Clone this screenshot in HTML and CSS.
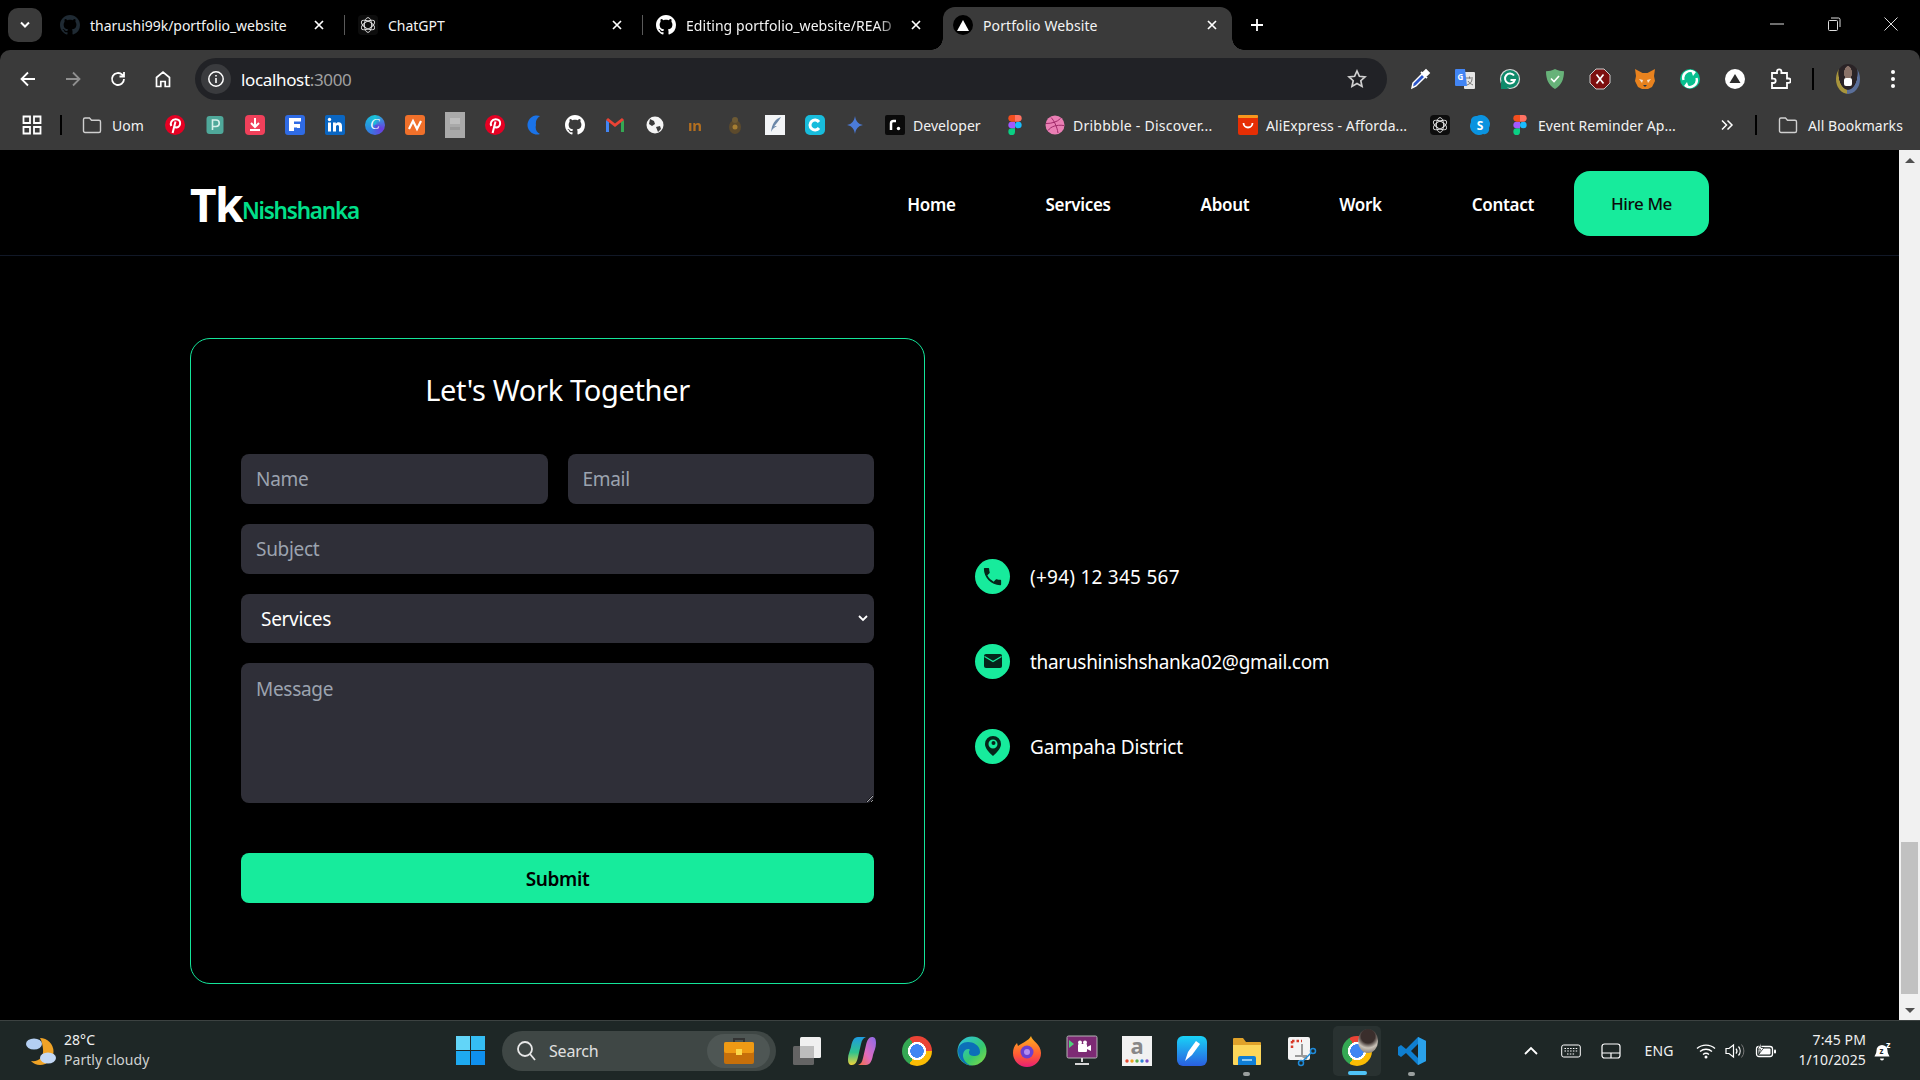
FILE: index.html
```html
<!DOCTYPE html>
<html lang="en">
<head>
<meta charset="utf-8">
<title>Portfolio Website</title>
<link rel="stylesheet" href="styles.css">
</head>
<body>
<svg class="sprite" aria-hidden="true">
  <symbol id="gh" viewBox="0 0 16 16"><path fill="currentColor" d="M8 0C3.58 0 0 3.58 0 8c0 3.54 2.29 6.53 5.47 7.59.4.07.55-.17.55-.38 0-.19-.01-.82-.01-1.49-2.01.37-2.53-.49-2.69-.94-.09-.23-.48-.94-.82-1.13-.28-.15-.68-.52-.01-.53.63-.01 1.08.58 1.23.82.72 1.21 1.87.87 2.33.66.07-.52.28-.87.51-1.07-1.78-.2-3.64-.89-3.64-3.95 0-.87.31-1.59.82-2.15-.08-.2-.36-1.02.08-2.12 0 0 .67-.21 2.2.82.64-.18 1.32-.27 2-.27s1.36.09 2 .27c1.53-1.04 2.2-.82 2.2-.82.44 1.1.16 1.92.08 2.12.51.56.82 1.27.82 2.15 0 3.07-1.87 3.75-3.65 3.95.29.25.54.73.54 1.48 0 1.07-.01 1.93-.01 2.2 0 .21.15.46.55.38A8.013 8.013 0 0016 8c0-4.42-3.58-8-8-8z"/></symbol>
  <symbol id="gpt" viewBox="0 0 20 20"><rect width="20" height="20" rx="4" fill="#0d0d0d"/><g fill="none" stroke="#e8e8e8" stroke-width=".9"><ellipse cx="10" cy="10" rx="3.6" ry="7.4"/><ellipse cx="10" cy="10" rx="3.6" ry="7.4" transform="rotate(60 10 10)"/><ellipse cx="10" cy="10" rx="3.6" ry="7.4" transform="rotate(120 10 10)"/></g></symbol>
  <symbol id="x" viewBox="0 0 14 14"><path d="M3 3l8 8M11 3l-8 8" stroke="#fff" stroke-width="1.7" fill="none"/></symbol>
  <symbol id="folder" viewBox="0 0 20 18"><path d="M1.5 3.5a1.5 1.5 0 011.5-1.5h4.5l2 2.2H17a1.5 1.5 0 011.5 1.5v9.3a1.5 1.5 0 01-1.5 1.5H3a1.5 1.5 0 01-1.5-1.5z" fill="none" stroke="#cfcfcf" stroke-width="1.4"/></symbol>
  <symbol id="pin" viewBox="0 0 20 20"><circle cx="10" cy="10" r="10" fill="#e60023"/><path d="M7.600 18l2.900-11.500M6.300 11C4.800 8 6.800 4.200 10.600 4.200c3.200 0 4.900 2 4.500 4.700-.4 2.700-2.700 4.300-4.900 3.100" fill="none" stroke="#fff" stroke-width="2"/></symbol>
  <symbol id="figma" viewBox="0 0 12 18"><circle cx="9" cy="9" r="3" fill="#1abcfe"/><path d="M3 18a3 3 0 003-3v-3H3a3 3 0 000 6z" fill="#0acf83"/><path d="M0 9a3 3 0 013-3h3v6H3a3 3 0 01-3-3z" fill="#a259ff"/><path d="M0 3a3 3 0 013-3h3v6H3a3 3 0 01-3-3z" fill="#f24e1e"/><path d="M6 0h3a3 3 0 010 6H6z" fill="#ff7262"/></symbol>
</svg>

<header class="tabstrip">
  <button class="tab-menu" type="button"><svg width="12" height="8" viewBox="0 0 12 8"><path d="M2 1.500l4 4 4-4" stroke="#fff" stroke-width="2" fill="none"/></svg></button>
  <div class="tab"><svg class="fav fav-dim"><use href="#gh"/></svg><span class="tab-title">tharushi99k/portfolio_website</span><svg class="tab-x"><use href="#x"/></svg></div>
  <div class="tab"><svg class="fav"><use href="#gpt"/></svg><span class="tab-title">ChatGPT</span><svg class="tab-x"><use href="#x"/></svg></div>
  <div class="tab tab-last"><svg class="fav"><use href="#gh"/></svg><span class="tab-title tab-fade">Editing portfolio_website/READ</span><svg class="tab-x"><use href="#x"/></svg></div>
  <div class="tab-active"><span class="vercel"><svg width="12" height="11" viewBox="0 0 12 11"><path d="M6 0l6 11H0z" fill="#fff"/></svg></span><span class="tab-title">Portfolio Website</span><svg class="tab-x"><use href="#x"/></svg></div>
  <svg class="new-tab" width="14" height="14" viewBox="0 0 14 14"><path d="M7 1v12M1 7h12" stroke="#fff" stroke-width="1.800"/></svg>
  <div class="win-controls">
    <svg width="14" height="14" viewBox="0 0 14 14"><path d="M0 7h14" stroke="#ddd"/></svg>
    <svg width="14" height="14" viewBox="0 0 14 14"><path d="M1.500 4.500a1 1 0 011-1h7a1 1 0 011 1v8a1 1 0 01-1 1h-7a1 1 0 01-1-1zM4 1h7.500a1.500 1.500 0 011.500 1.500V10" fill="none" stroke="#ddd"/></svg>
    <svg width="14" height="14" viewBox="0 0 14 14"><path d="M.5.500l13 13M13.500.500l-13 13" stroke="#ddd"/></svg>
  </div>
</header>

<div class="toolbar">
  <svg class="tool" viewBox="0 0 20 20"><path d="M17 10H4M10 3.500L3.500 10l6.500 6.500" fill="none" stroke="#fff" stroke-width="1.800"/></svg>
  <svg class="tool tool-off" viewBox="0 0 20 20"><path d="M3 10h13M10 3.500l6.500 6.500-6.500 6.500" fill="none" stroke="#8f8f8f" stroke-width="1.800"/></svg>
  <svg class="tool" viewBox="0 0 20 20"><path d="M16 10a6 6 0 11-1.800-4.300L16 7.500M16 3v4.500h-4.500" fill="none" stroke="#fff" stroke-width="1.800"/></svg>
  <svg class="tool" viewBox="0 0 20 20"><path d="M3.500 17.500V8.500L10 3l6.500 5.500v9h-4.300v-5H7.800v5z" fill="none" stroke="#fff" stroke-width="1.700"/></svg>
  <div class="omnibox">
    <span class="site-info"><svg width="18" height="18" viewBox="0 0 18 18"><circle cx="9" cy="9" r="7.200" fill="none" stroke="#fff" stroke-width="1.500"/><path d="M9 8v5M9 5v1.500" stroke="#fff" stroke-width="1.600"/></svg></span>
    <span class="url">localhost<span class="url-dim">:3000</span></span>
    <svg class="star" width="20" height="20" viewBox="0 0 20 20"><path d="M10 2l2.400 5.300 5.600.6-4.200 3.800 1.200 5.700L10 14.500l-5 2.900 1.200-5.700L2 7.900l5.600-.6z" fill="none" stroke="#d0d0d0" stroke-width="1.700"/></svg>
  </div>
  <div class="extensions">
    <svg class="ext" viewBox="0 0 22 22"><path d="M3 20l1-5 9-9 3 3-9 9z" fill="#2a55c9" stroke="#fff" stroke-width="1.500"/><path d="M12 4l6 6M14 5l3-3 3 3-3 3z" fill="#fff" stroke="#fff" stroke-width="1.800"/></svg>
    <svg class="ext" viewBox="0 0 22 22"><rect x="10" y="4" width="11" height="17" rx="1" fill="#e6e6e6"/><path d="M12 10h7M15.500 8.500v2M13 17c3-1 5-3 5-6M14 13c1 2 3 3 5 4" stroke="#777" stroke-width="1" fill="none"/><path d="M1 2a1 1 0 011-1h9l2 17H2a1 1 0 01-1-1z" fill="#4285f4"/><text class="ext-g" x="3.500" y="12">G</text></svg>
    <svg class="ext" viewBox="0 0 22 22"><circle cx="11" cy="11" r="9.500" fill="#0f8a6b" stroke="#d8d8d8" stroke-width="1.200"/><path d="M15 7.500A5 5 0 1015.800 12H11.500" fill="none" stroke="#fff" stroke-width="2"/><path d="M2 21h8l-8-8z" fill="#0f8a6b"/></svg>
    <svg class="ext" viewBox="0 0 22 22"><path d="M11 1c3 1.600 6 2.200 9 2.300 0 8-2.500 14-9 17.700C4.500 17.300 2 11.300 2 3.300 5 3.200 8 2.600 11 1z" fill="#67b279"/><path d="M7 10.500l3 3 5-5.500" fill="none" stroke="#fff" stroke-width="1.600"/></svg>
    <svg class="ext" viewBox="0 0 22 22"><path d="M7 1h8l6 6v8l-6 6H7l-6-6V7z" fill="#7d0f0f" stroke="#ccc" stroke-width="1"/><path d="M7.500 6.500l7 9M14.500 6.500l-7 9" stroke="#fff" stroke-width="1.700"/></svg>
    <svg class="ext" viewBox="0 0 22 22"><path d="M1 1l7.500 4h5L21 1l-1 7 1 5-3 6-4 2H8l-4-2-3-6 1-5z" fill="#e8821e"/><path d="M5 11l4 1-1 3zM17 11l-4 1 1 3z" fill="#f6e3cf"/><path d="M9 17l2 2 2-2z" fill="#233447"/></svg>
    <svg class="ext" viewBox="0 0 22 22"><circle cx="11" cy="11" r="10" fill="#08c08f"/><path d="M15.500 4.500A7 7 0 004.500 12M6.500 17.500A7 7 0 0017.500 10" fill="none" stroke="#fff" stroke-width="2.400"/><path d="M12 2l5 2-3 4zM10 20l-5-2 3-4z" fill="#fff"/></svg>
    <svg class="ext" viewBox="0 0 22 22"><circle cx="11" cy="11" r="10" fill="#fff"/><path d="M11 6l5.500 9h-11z" fill="#2d2d2d"/></svg>
    <svg class="ext" viewBox="0 0 22 22"><path d="M3 5h5V3.500a2.200 2.200 0 014.400 0V5H18v5.500h1.500a2.200 2.200 0 010 4.400H18V20H3v-5h1.500a2.200 2.200 0 000-4.400H3z" fill="none" stroke="#fff" stroke-width="1.800"/></svg>
    <span class="tool-sep"></span>
    <span class="avatar"><span class="avatar-mask"></span></span>
    <svg class="kebab" width="6" height="20" viewBox="0 0 6 20"><circle cx="3" cy="3" r="2" fill="#fff"/><circle cx="3" cy="10" r="2" fill="#fff"/><circle cx="3" cy="17" r="2" fill="#fff"/></svg>
  </div>
</div>

<nav class="bookmarks">
  <svg class="apps" viewBox="0 0 20 20"><path d="M1.500 1.500h6.500v6.500H1.500zM12 1.500h6.500v6.500H12zM1.500 12h6.500v6.500H1.500zM12 12h6.500v6.500H12z" fill="none" stroke="#fff" stroke-width="1.800"/></svg>
  <span class="bm-sep"></span>
  <div class="bm-folder"><svg class="bm-ico"><use href="#folder"/></svg><span class="bm-label l-uom">Uom</span></div>
  <div class="bm-slot"><svg class="bm-ico"><use href="#pin"/></svg></div>
  <div class="bm-slot"><svg class="bm-ico" viewBox="0 0 20 20"><rect x="1.500" y="1" width="17" height="18" rx="3" fill="#4fa89a"/><path d="M7.500 15V5h3.500a3 3 0 010 6.500H8" fill="none" stroke="#d6f0ea" stroke-width="1.600"/></svg></div>
  <div class="bm-slot"><svg class="bm-ico" viewBox="0 0 20 20"><rect width="20" height="20" rx="4" fill="#f0405a"/><path d="M10 3v8M6 8l4 4 4-4M5 15h10" fill="none" stroke="#fff" stroke-width="2"/></svg></div>
  <div class="bm-slot"><svg class="bm-ico" viewBox="0 0 20 20"><rect width="20" height="20" rx="3" fill="#2f6be4"/><path d="M4 3h12v4H9v2h6v4H9v3H4z" fill="#fff"/><path d="M9 7h7M9 13h3" stroke="#2f6be4" stroke-width="1"/></svg></div>
  <div class="bm-slot"><svg class="bm-ico" viewBox="0 0 20 20"><rect width="20" height="20" rx="2" fill="#0a66c2"/><rect x="3" y="7.500" width="3" height="9" fill="#fff"/><circle cx="4.500" cy="4.500" r="1.700" fill="#fff"/><path d="M8 7.500h2.800v1.300c.5-.9 1.500-1.500 2.800-1.500 2.300 0 3.400 1.300 3.400 3.900v5.300h-3v-4.700c0-1.200-.4-1.900-1.400-1.900s-1.600.7-1.600 1.900v4.700H8z" fill="#fff"/></svg></div>
  <div class="bm-slot"><span class="canva">C</span></div>
  <div class="bm-slot"><svg class="bm-ico" viewBox="0 0 20 20"><rect width="20" height="20" rx="3" fill="#f0702a"/><path d="M4 14l4-8 4 8 4-8" fill="none" stroke="#fff" stroke-width="2.200"/></svg></div>
  <div class="bm-slot"><svg class="bm-ico bm-tall" viewBox="0 0 20 26"><rect width="20" height="26" fill="#a9a9a9"/><rect x="5" y="6" width="10" height="6" fill="#bdbdbd"/><rect x="5" y="15" width="10" height="3" fill="#999"/></svg></div>
  <div class="bm-slot"><svg class="bm-ico"><use href="#pin"/></svg></div>
  <div class="bm-slot"><svg class="bm-ico" viewBox="0 0 20 20"><path d="M15 1A9.500 9.500 0 1015 19 8 8 0 0111 10 9 9 0 0115 1z" fill="#1a73e8"/></svg></div>
  <div class="bm-slot"><svg class="bm-ico bm-gh"><use href="#gh"/></svg></div>
  <div class="bm-slot"><svg class="bm-ico" viewBox="0 0 20 20"><path d="M1 17V5l3 2v10z" fill="#4285f4"/><path d="M19 17V5l-3 2v10z" fill="#34a853"/><path d="M1 5l9 7 9-7-2-2-7 5.500L3 3z" fill="#ea4335"/></svg></div>
  <div class="bm-slot"><svg class="bm-ico" viewBox="0 0 20 20"><circle cx="10" cy="10" r="8.500" fill="#f4f4f4"/><path d="M5 4l4 2 1 3-3 2-3-2zM11 12l4-1 1 3-3 3z" fill="#3a3a3a"/></svg></div>
  <div class="bm-slot"><span class="invision">ın</span></div>
  <div class="bm-slot"><svg class="bm-ico" viewBox="0 0 20 20"><ellipse cx="10" cy="12" rx="6" ry="7" fill="#5c4a2c"/><circle cx="10" cy="5" r="3" fill="#6d5a34"/><circle cx="10" cy="12" r="2.500" fill="#a67e32"/></svg></div>
  <div class="bm-slot"><svg class="bm-ico" viewBox="0 0 20 20"><rect width="20" height="20" fill="#f2f4f6"/><path d="M16 2C10 4 7 9 6 17c1-3 4-5 6-6-1 0-2 0-3 .5C11 9 14 6 16 2z" fill="#6a87a8"/></svg></div>
  <div class="bm-slot"><svg class="bm-ico" viewBox="0 0 20 20"><rect width="20" height="20" rx="5" fill="#18bcdc"/><path d="M14 7a5 5 0 100 6" fill="none" stroke="#fff" stroke-width="3"/></svg></div>
  <div class="bm-slot"><svg class="bm-ico" viewBox="0 0 20 20"><path d="M10 1c.8 5 3 8.200 8 9-5 .8-7.200 4-8 9-.8-5-3-8.200-8-9 5-.8 7.200-4 8-9z" fill="#4b7bd8"/></svg></div>
  <div class="bm-item"><svg class="bm-ico" viewBox="0 0 20 20"><rect width="20" height="20" rx="2" fill="#0a0a0a"/><path d="M6 15V8.500A2.500 2.500 0 018.500 6H11" fill="none" stroke="#fff" stroke-width="2.500"/><circle cx="13.500" cy="13.500" r="1.700" fill="#fff"/></svg><span class="bm-label l-dev">Developer</span></div>
  <div class="bm-slot"><svg class="bm-ico"><use href="#figma"/></svg></div>
  <div class="bm-item"><svg class="bm-ico" viewBox="0 0 20 20"><circle cx="10" cy="10" r="9.500" fill="#ea7fb4"/><path d="M6 2.500c3 3 6 9 7 15.500M1 8.500c6 0 11-1.500 14.500-5M3 15.500c3-4 8-6 16-5" fill="none" stroke="#a02a6a" stroke-width="1"/></svg><span class="bm-label l-dri">Dribbble - Discover...</span></div>
  <div class="bm-item"><svg class="bm-ico" viewBox="0 0 20 20"><rect width="20" height="20" rx="2" fill="#e62e04"/><rect width="20" height="3" rx="1" fill="#f7971d"/><path d="M5.500 8a4.500 4.500 0 009 0" fill="none" stroke="#fff" stroke-width="1.800"/></svg><span class="bm-label l-ali">AliExpress - Afforda...</span></div>
  <div class="bm-slot"><svg class="bm-ico"><use href="#gpt"/></svg></div>
  <div class="bm-slot"><svg class="bm-ico" viewBox="0 0 20 20"><path d="M6 1a5 5 0 00-5 6 9 9 0 0012 12 5 5 0 006-6A9 9 0 007 1z" fill="#0a93e0"/><text class="skype" x="10" y="15">S</text></svg></div>
  <div class="bm-item"><svg class="bm-ico"><use href="#figma"/></svg><span class="bm-label l-eve">Event Reminder Ap...</span></div>
  <svg class="bm-more" viewBox="0 0 14 12"><path d="M2 1.500L6.500 6 2 10.500M7.500 1.500L12 6l-4.500 4.500" fill="none" stroke="#fff" stroke-width="1.500"/></svg>
  <span class="bm-sep bm-sep-end"></span>
  <div class="bm-folder bm-all"><svg class="bm-ico"><use href="#folder"/></svg><span class="bm-label">All Bookmarks</span></div>
</nav>

<div class="viewport">
  <main class="page">
    <div class="site-nav">
      <a class="logo"><span class="logo-tk">Tk</span><span class="logo-name">Nishshanka</span></a>
      <div class="nav-links">
        <a class="nav-link">Home</a>
        <a class="nav-link">Services</a>
        <a class="nav-link">About</a>
        <a class="nav-link">Work</a>
        <a class="nav-link">Contact</a>
        <a class="hire">Hire Me</a>
      </div>
    </div>
    <section class="contact">
      <form class="card">
        <h2 class="card-title">Let's Work Together</h2>
        <div class="field-row">
          <input class="field" type="text" placeholder="Name">
          <input class="field" type="email" placeholder="Email">
        </div>
        <input class="field" type="text" placeholder="Subject">
        <select class="field field-select"><option>Services</option></select>
        <textarea class="field field-area" placeholder="Message"></textarea>
        <button class="submit" type="button">Submit</button>
      </form>
      <ul class="info">
        <li class="info-row"><span class="info-ico"><svg width="23" height="23" viewBox="0 0 24 24"><path fill="#052419" d="M6.620 10.790c1.440 2.830 3.760 5.140 6.590 6.590l2.200-2.200c.27-.27.67-.36 1.020-.24 1.120.37 2.330.57 3.570.57.55 0 1 .45 1 1V20c0 .55-.45 1-1 1-9.390 0-17-7.610-17-17 0-.55.45-1 1-1h3.500c.55 0 1 .45 1 1 0 1.250.2 2.450.57 3.570.11.35.03.74-.25 1.020l-2.200 2.200z"/></svg></span><span class="info-text t-phone">(+94) 12 345 567</span></li>
        <li class="info-row"><span class="info-ico"><svg width="20" height="20" viewBox="0 0 20 20"><rect x="1" y="3" width="18" height="14" rx="2" fill="#052419"/><path d="M1.500 5.500L10 10.500l8.500-5" fill="none" stroke="#17eb9c" stroke-width="1.300"/></svg></span><span class="info-text t-mail">tharushinishshanka02@gmail.com</span></li>
        <li class="info-row"><span class="info-ico"><svg width="20" height="22" viewBox="0 0 20 22"><path fill="#052419" fill-rule="evenodd" d="M10 1a8 8 0 00-8 8c0 4.500 4.500 9 8 12 3.500-3 8-7.500 8-12a8 8 0 00-8-8zm0 3.500a4.500 4.500 0 110 9 4.500 4.500 0 010-9z"/><circle cx="10.500" cy="8" r="2" fill="#052419"/></svg></span><span class="info-text">Gampaha District</span></li>
      </ul>
    </section>
  </main>
  <aside class="scrollbar">
    <span class="arrow-up"></span>
    <span class="thumb"></span>
    <span class="arrow-down"></span>
  </aside>
</div>

<footer class="taskbar">
  <div class="weather">
    <svg width="32" height="32" viewBox="0 0 32 32"><path d="M15 3a13.500 13.500 0 010 27 13 13 0 01-9-4c8 1 13-4 12-12-.5-4-1-8-3-11z" fill="#f0a326"/><ellipse cx="9" cy="9" rx="8" ry="5.500" fill="#b4cff2"/><ellipse cx="23" cy="23" rx="8" ry="5.500" fill="#c3d8f5"/></svg>
    <div class="weather-text"><span>28°C</span><span class="weather-sub">Partly cloudy</span></div>
  </div>
  <svg class="win-logo" viewBox="0 0 29 29"><path d="M0 0h14v14H0z" fill="#62d5f8"/><path d="M15 0h14v14H15z" fill="#35bdf3"/><path d="M0 15h14v14H0z" fill="#1eaaf0"/><path d="M15 15h14v14H15z" fill="#0f90ee"/></svg>
  <div class="search">
    <svg width="20" height="22" viewBox="0 0 20 22"><circle cx="9" cy="9" r="7" fill="none" stroke="#e8e8e8" stroke-width="1.800"/><path d="M14 14l5 6" stroke="#e8e8e8" stroke-width="1.800"/></svg>
    <span class="search-label">Search</span>
    <span class="search-pill"><svg width="30" height="26" viewBox="0 0 30 26"><path d="M10 4V1h10v3" fill="none" stroke="#333" stroke-width="2"/><rect y="4" width="30" height="22" rx="2" fill="#c66f0a"/><rect y="4" width="30" height="11" rx="2" fill="#ef9a14"/><rect x="12" y="11" width="6" height="6" fill="#fbd84b"/></svg></span>
  </div>
  <div class="task-apps">
    <div class="app"><svg class="app-ico" viewBox="0 0 30 30"><rect x="8" y="1" width="21" height="21" rx="1.500" fill="#f0f0f0"/><rect x="1" y="10" width="21" height="19" rx="1.500" fill="#6b6b6b" fill-opacity=".9"/><rect x="8" y="10" width="14" height="12" fill="#bdbdbd"/></svg></div>
    <div class="app"><svg class="app-ico" viewBox="0 0 30 30"><defs><linearGradient id="cop1" x1="0" y1="0" x2="0" y2="1"><stop offset="0" stop-color="#1e9be0"/><stop offset=".55" stop-color="#2fc38d"/><stop offset="1" stop-color="#f0d23a"/></linearGradient><linearGradient id="cop2" x1="1" y1="0" x2="0" y2="1"><stop offset="0" stop-color="#8a6be8"/><stop offset=".55" stop-color="#e06bc0"/><stop offset="1" stop-color="#f2703b"/></linearGradient></defs><path d="M11 1h8c-3 1-4 3-5 7l-3 13c-1 5-3 8-6 8-3 0-4-2-4-6 0-5 2-8 3-12 1-6 3-10 7-10z" fill="url(#cop1)"/><path d="M19 29h-8c3-1 4-3 5-7l3-13c1-5 3-8 6-8 3 0 4 2 4 6 0 5-2 8-3 12-1 6-3 10-7 10z" fill="url(#cop2)"/></svg></div>
    <div class="app"><span class="chrome"></span></div>
    <div class="app"><svg class="app-ico" viewBox="0 0 30 30"><defs><linearGradient id="edge" x1="0" y1="0" x2="1" y2="1"><stop offset="0" stop-color="#2cc3e8"/><stop offset=".6" stop-color="#36c86f"/><stop offset="1" stop-color="#8ddc3f"/></linearGradient></defs><circle cx="15" cy="15" r="14.500" fill="url(#edge)"/><path d="M1 15c0-6 5-9 10-9s12 3 12 10c0 3-3 4-6 4-5 0-5-3-5-4s2-3-1-3-5 3-5 7 5 10 11 10C9 30 1 24 1 15z" fill="#0c6fb8"/></svg></div>
    <div class="app"><svg class="app-ico" viewBox="0 0 30 30"><defs><linearGradient id="ff" x1="0" y1="0" x2="0" y2="1"><stop offset="0" stop-color="#ffb01f"/><stop offset=".6" stop-color="#ff5b34"/><stop offset="1" stop-color="#e81e74"/></linearGradient></defs><path d="M19 0c1 5 10 8 10 17a14 14 0 01-28 0c0-4 1-7 4-10l1 3c2-2 6-3 8-5 2-1 4-3 5-5z" fill="url(#ff)"/><circle cx="15" cy="16" r="6.500" fill="#6a3fd1"/><circle cx="15" cy="16" r="3" fill="#b28cf2"/></svg></div>
    <div class="app"><svg class="app-ico" viewBox="0 0 30 30"><rect width="30" height="22" rx="1.500" fill="#7d2a74" stroke="#b5b5b5" stroke-width="1"/><path d="M2 4l5 4-5 4z" fill="#4fd07c"/><rect x="11" y="8" width="9" height="8" rx="1" fill="#fff"/><circle cx="13" cy="6.500" r="2" fill="#fff"/><circle cx="18" cy="6.500" r="2" fill="#fff"/><path d="M20 11l4-2v6l-4-2z" fill="#fff"/><path d="M15 22v4M8 28h14" stroke="#d6d6d6" stroke-width="2"/></svg></div>
    <div class="app"><svg class="app-ico" viewBox="0 0 30 30"><rect width="30" height="30" fill="#f1f1f1"/><text class="amz" x="15" y="18">a</text><circle cx="5" cy="25" r="1.700" fill="#e5482f"/><circle cx="10" cy="25" r="1.700" fill="#f0a31c"/><circle cx="15" cy="25" r="1.700" fill="#5bb14a"/><circle cx="20" cy="25" r="1.700" fill="#2b86d9"/><circle cx="25" cy="25" r="1.700" fill="#7a4bc8"/></svg></div>
    <div class="app"><svg class="app-ico" viewBox="0 0 30 30"><defs><linearGradient id="pen" x1="0" y1="0" x2="0" y2="1"><stop offset="0" stop-color="#19d3f7"/><stop offset="1" stop-color="#2a5fe0"/></linearGradient></defs><rect width="30" height="30" rx="6" fill="url(#pen)"/><path d="M8 25l3-9 8-11 4 3-8 11z" fill="#fff"/></svg></div>
    <div class="app app-open"><svg class="app-ico" viewBox="0 0 30 30"><path d="M1 3a1 1 0 011-1h9l3 4h14a1 1 0 011 1v4H1z" fill="#e0a22a"/><path d="M1 9h28v19a1 1 0 01-1 1H2a1 1 0 01-1-1z" fill="#fcd65a"/><path d="M6 29V22a2 2 0 012-2h14a2 2 0 012 2v7z" fill="#0f7ed6"/><rect x="10" y="23" width="10" height="2" fill="#8ccaf5"/></svg></div>
    <div class="app"><svg class="app-ico" viewBox="0 0 30 30"><rect x="1" y="1" width="22" height="23" rx="2" fill="#f4f4f4"/><path d="M5 5h10M5 5v8" stroke="#d83b2a" stroke-width="2.500" stroke-dasharray="2.500 2"/><path d="M15 8v12l5 3M8 20h12" stroke="#9a9a9a" stroke-width="2" fill="none"/><circle cx="26" cy="15" r="2.500" fill="none" stroke="#1f8ad8" stroke-width="1.500"/><circle cx="14" cy="27" r="2.500" fill="none" stroke="#1f8ad8" stroke-width="1.500"/><path d="M24 17l-8 8" stroke="#1f8ad8" stroke-width="1.500"/></svg></div>
    <div class="app app-active"><span class="chrome"></span><span class="chrome-badge"></span></div>
    <div class="app app-open"><svg class="app-ico" viewBox="0 0 30 30"><path d="M21 1l8 4v20l-8 4L9 17l-5 4-3-2v-8l3-2 5 4z" fill="#0f7fd0"/><path d="M21 1l8 4v20l-8 4z" fill="#2aa1ea"/><path d="M21 8l-7 7 7 7z" fill="#1b2321"/></svg></div>
  </div>
  <div class="tray">
    <svg class="tr-chev" width="16" height="10" viewBox="0 0 16 10"><path d="M2 8l6-6 6 6" fill="none" stroke="#fff" stroke-width="1.800"/></svg>
    <svg class="tr-kb" width="20" height="16" viewBox="0 0 20 16"><rect x=".7" y="2" width="18.600" height="12" rx="2" fill="none" stroke="#fff" stroke-width="1"/><path d="M3.500 5.500h13M3.500 8h13M6 11h8" stroke="#fff" stroke-width="1.200" stroke-dasharray="1.500 1.300"/></svg>
    <svg class="tr-pad" width="20" height="16" viewBox="0 0 20 16"><rect x="1" y="1" width="18" height="14" rx="2.500" fill="none" stroke="#fff" stroke-width="1.200"/><path d="M1 10h18M10 10v5" stroke="#fff" stroke-width="1.200"/></svg>
    <span class="tr-lang">ENG</span>
    <svg class="tr-wifi" width="20" height="16" viewBox="0 0 20 16"><path d="M1 5.500c5-4.500 13-4.500 18 0M4 8.500c3.500-3 8.500-3 12 0M7 11.500c1.800-1.400 4.200-1.400 6 0" fill="none" stroke="#fff" stroke-width="1.400"/><circle cx="10" cy="14" r="1.500" fill="#fff"/></svg>
    <svg class="tr-vol" width="20" height="16" viewBox="0 0 20 16"><path d="M1 5.500h3L8.500 2v12L4 10.500H1z" fill="none" stroke="#fff" stroke-width="1.200"/><path d="M11 5.500a4 4 0 010 5M13.500 3.500a7 7 0 010 9" fill="none" stroke="#fff" stroke-width="1.200"/><path d="M16.500 1.500a10 10 0 010 13" fill="none" stroke="#777" stroke-width="1"/></svg>
    <svg class="tr-bat" width="22" height="16" viewBox="0 0 22 16"><rect x="1.500" y="3.500" width="16" height="10" rx="2.500" fill="none" stroke="#fff" stroke-width="1.300"/><rect x="3.500" y="5.500" width="12" height="6" rx="1" fill="#fff"/><rect x="19" y="6.500" width="2" height="4" rx="1" fill="#fff"/><path d="M6 0L2.500 6h3L4 11 9 4.500H6z" fill="#fff" stroke="#1e2726" stroke-width=".8"/></svg>
    <div class="tr-clock"><span>7:45 PM</span><span>1/10/2025</span></div>
    <svg class="tr-bell" width="20" height="24" viewBox="0 0 20 24"><path d="M8 6a5.500 5.500 0 00-5.500 5.500c0 3-1.500 4.500-2 6h15c-.5-1.500-2-3-2-6A5.500 5.500 0 008 6z" fill="#fff"/><path d="M6 19.500h4a2 2 0 01-4 0z" fill="#fff"/><text class="tr-z" x="5.500" y="15">z</text><text class="tr-z2" x="12" y="9">z</text></svg>
  </div>
</footer>
</body>
</html>
```

FILE: styles.css
```css
* { box-sizing: border-box; }
html, body { margin: 0; height: 100%; }
body {
  display: flex;
  flex-direction: column;
  height: 1080px;
  overflow: hidden;
  background: #000;
  color: #fff;
  font-family: "Noto Sans", "Open Sans", sans-serif;
}
.sprite { display: none; }

/* ---------- tab strip ---------- */
.tabstrip { display: flex; align-items: flex-start; height: 50px; flex: none; background: #000; padding-left: 8px; }
.tab-menu { width: 34px; height: 34px; margin: 8px 5px 0 0; border: 0; padding: 0; border-radius: 10px; background: #3a3a3a; display: flex; align-items: center; justify-content: center; }
.tab { width: 298px; height: 20px; margin-top: 15px; padding-left: 13px; padding-right: 18px; display: flex; align-items: center; border-right: 1px solid #5a5a5a; }
.tab-last { border-right: 0; margin-right: 2px; }
.fav { width: 20px; height: 20px; flex: none; margin-right: 10px; color: #fff; }
.fav-dim { color: #1f2a33; }
.tab-title { flex: 1; min-width: 0; font-size: 14px; letter-spacing: -.03px; white-space: nowrap; color: #f4f4f4; }
.tab-fade { -webkit-mask-image: linear-gradient(90deg, #000 88%, transparent 100%); mask-image: linear-gradient(90deg, #000 88%, transparent 100%); margin-right: 6px; letter-spacing: .05px; }
.tab-x { width: 14px; height: 14px; flex: none; }
.tab-active { position: relative; width: 289px; height: 43px; margin-top: 7px; padding: 0 13px 7px 10px; display: flex; align-items: center; background: #3a3a3a; border-radius: 12px 12px 0 0; }
.tab-active .tab-title { letter-spacing: .1px; }
.tab-active::before, .tab-active::after { content: ""; position: absolute; bottom: 0; width: 12px; height: 12px; }
.tab-active::before { left: -12px; background: radial-gradient(circle at 0 0, transparent 11.5px, #3a3a3a 12px); }
.tab-active::after { right: -12px; background: radial-gradient(circle at 100% 0, transparent 11.5px, #3a3a3a 12px); }
.vercel { width: 20px; height: 20px; flex: none; margin-right: 10px; border-radius: 50%; background: #000; display: flex; align-items: center; justify-content: center; }
.new-tab { margin: 18px 0 0 18px; }
.win-controls { margin-left: auto; display: flex; gap: 43px; padding: 17px 22px 0 0; }

/* ---------- toolbar ---------- */
.toolbar { display: flex; align-items: center; height: 50px; flex: none; background: #3a3a3a; border-radius: 10px 10px 0 0; padding: 8px 0 0 18px; }
.tool { width: 20px; height: 20px; flex: none; margin-right: 25px; }
.omnibox { width: 1192px; height: 42px; margin-left: -3px; border-radius: 21px; background: #212226; display: flex; align-items: center; padding: 0 20px 0 6px; }
.site-info { width: 30px; height: 30px; border-radius: 50%; background: #3a3b3e; display: flex; align-items: center; justify-content: center; }
.url { margin-left: 10px; font-size: 17px; letter-spacing: -.35px; color: #fff; }
.url-dim { color: #a0a0a0; }
.star { margin-left: auto; }
.extensions { display: flex; align-items: center; margin-left: 22px; }
.ext { width: 22px; height: 22px; flex: none; margin-right: 23px; }
.ext-g { font: 700 8px "Noto Sans", sans-serif; fill: #fff; }
.tool-sep { width: 2px; height: 22px; background: #000; margin: 0 22px 0 -2px; }
.avatar { width: 24px; height: 30px; border-radius: 50%; background: radial-gradient(ellipse at 50% 30%, #8a7268 0 22%, #2a2326 24% 55%, transparent 58%), linear-gradient(90deg, #a8953c 0 45%, #5a6f9a 45%); display: flex; justify-content: center; align-items: flex-end; padding-bottom: 8px; }
.avatar-mask { width: 8px; height: 8px; background: #fff; border-radius: 2px; }
.kebab { margin-left: 30px; }

/* ---------- bookmarks ---------- */
.bookmarks { display: flex; align-items: center; height: 50px; flex: none; background: #3a3a3a; padding-left: 22px; }
.apps { width: 20px; height: 20px; flex: none; }
.bm-sep { width: 2px; height: 20px; background: #000; margin: 0 20px 0 18px; flex: none; }
.bm-folder { display: flex; align-items: center; gap: 10px; margin-right: 11px; }
.bm-ico { width: 20px; height: 20px; flex: none; display: block; color: #fff; }
.bm-tall { height: 26px; }
.bm-slot { width: 40px; height: 26px; flex: none; display: flex; align-items: center; justify-content: center; }
.bm-item { display: flex; align-items: center; gap: 8px; padding: 0 10px; flex: none; }
.bm-label { display: block; font-size: 14px; letter-spacing: .05px; white-space: nowrap; color: #f2f2f2; }
.l-uom { width: 32px; }
.l-dev { width: 72px; }
.l-dri { width: 145px; letter-spacing: .25px; }
.l-ali { width: 144px; letter-spacing: .1px; }
.l-eve { width: 142px; }
.canva { width: 20px; height: 20px; border-radius: 50%; background: conic-gradient(#19c5d8, #6a3de0, #2a8ae0, #19c5d8); display: flex; align-items: center; justify-content: center; font: italic 14px "Liberation Serif", serif; color: #fff; }
.invision { font: 700 15px "Noto Sans", sans-serif; color: #c9791b; line-height: 20px; opacity: .85; }
.skype { font: 700 12px "Noto Sans", sans-serif; fill: #fff; text-anchor: middle; }
.bm-more { width: 14px; height: 12px; margin-left: 30px; flex: none; }
.bm-sep-end { margin: 0 21px 0 21px; }
.bm-all { margin: 0; }

/* ---------- viewport ---------- */
.viewport { display: flex; flex: 1; min-height: 0; }
.page { flex: 1; min-width: 0; background: #000; }
.site-nav { display: flex; align-items: center; justify-content: space-between; height: 106px; padding: 4px 190px 0 190px; border-bottom: 1px solid #111827; }
.logo { display: flex; align-items: flex-end; margin-bottom: 2px; }
.logo-tk { font-size: 46px; line-height: 52px; font-weight: 700; letter-spacing: -1.6px; color: #fff; }
.logo-name { font-size: 22.5px; line-height: 30px; padding-bottom: 4px; font-weight: 600; letter-spacing: -1.2px; color: #00e08a; }
.nav-links { display: flex; align-items: center; }
.nav-link { font-size: 17px; font-weight: 600; letter-spacing: -.32px; color: #fff; margin-right: 90px; }
.nav-link:nth-child(5) { margin-right: 40px; }
.hire { width: 135px; height: 65px; margin-bottom: 2px; display: flex; align-items: center; justify-content: center; border-radius: 16px; background: #17eb9c; color: #0b0b0b; font-size: 17px; font-weight: 500; letter-spacing: -.4px; }

.contact { display: flex; align-items: center; gap: 50px; padding: 82px 0 0 190px; }
.card { width: 735px; height: 646px; flex: none; border: 1px solid #14e59a; border-radius: 20px; padding: 33px 50px 0; display: flex; flex-direction: column; gap: 20px; }
.card-title { margin: 0 0 26px; height: 36px; line-height: 36px; font-size: 29px; font-weight: 400; text-align: center; letter-spacing: -.35px; color: #fff; }
.field-row { display: flex; gap: 20px; }
.field { display: block; width: 100%; height: 50px; flex: none; min-width: 0; border: 0; outline: 0; border-radius: 8px; background: #2f2f38; color: #fff; padding: 0 15px; font-family: "Noto Sans", sans-serif; font-size: 19px; letter-spacing: -.3px; }
.field-row .field { flex: 1; width: auto; }
.field::placeholder { color: #9ca3af; opacity: 1; }
.field-select {
  height: 49px;
  padding: 0 24px 0 20px;
  appearance: none;
  -webkit-appearance: none;
  background: #2f2f38 url("data:image/svg+xml,%3Csvg xmlns='http://www.w3.org/2000/svg' width='10' height='7' viewBox='0 0 10 7'%3E%3Cpath d='M1 1l4 4 4-4' fill='none' stroke='%23fff' stroke-width='1.800'/%3E%3C/svg%3E") no-repeat right 6px center;
}
.field-area { height: 140px; padding-top: 13px; resize: both; line-height: 26px; }
.submit { height: 50px; flex: none; margin-top: 30px; padding-top: 2px; border: 0; border-radius: 8px; background: #17eb9c; color: #000; font-family: "Noto Sans", sans-serif; font-size: 19px; font-weight: 600; letter-spacing: -.35px; }

.info { list-style: none; margin: 0; padding: 0; display: flex; flex-direction: column; gap: 50px; }
.info-row { display: flex; align-items: center; gap: 20px; font-size: 19px; letter-spacing: -.15px; color: #fff; }
.info-text { padding-top: 2px; }
.t-phone { letter-spacing: .25px; }
.t-mail { letter-spacing: -.3px; }
.info-ico { width: 35px; height: 35px; border-radius: 50%; background: #17eb9c; display: flex; align-items: center; justify-content: center; flex: none; }

.scrollbar { width: 21px; flex: none; background: #f1f1f1; display: flex; flex-direction: column; align-items: center; padding: 8px 0 7px; }
.arrow-up { width: 0; height: 0; border: 5px solid transparent; border-top: 0; border-bottom: 5px solid #505050; }
.thumb { width: 17px; height: 152px; margin-top: auto; background: #c1c1c1; }
.arrow-down { width: 0; height: 0; border: 5px solid transparent; border-bottom: 0; border-top: 5px solid #505050; margin-top: 14px; }

/* ---------- taskbar ---------- */
.taskbar { display: flex; align-items: center; height: 60px; flex: none; background: #1e2726; border-top: 1px solid #3c4241; padding-left: 25px; color: #f0f0f0; }
.weather { display: flex; align-items: center; gap: 7px; width: 431px; flex: none; }
.weather-text { display: flex; flex-direction: column; font-size: 14px; line-height: 20px; letter-spacing: .05px; margin-bottom: 2px; }
.weather-sub { color: #cfd2d1; }
.win-logo { width: 29px; height: 29px; flex: none; margin-right: 17px; }
.search { width: 274px; height: 40px; flex: none; border-radius: 20px; background: #3f4745; display: flex; align-items: center; padding: 0 6px 0 14px; }
.search-label { margin-left: 13px; font-size: 16px; letter-spacing: -.2px; color: #e0e0e0; }
.search-pill { margin-left: auto; width: 63px; height: 34px; border-radius: 17px; background: #4e5654; display: flex; align-items: center; justify-content: center; }
.task-apps { display: flex; margin-left: 3px; flex: none; }
.app { position: relative; width: 55px; height: 50px; flex: none; display: flex; align-items: center; justify-content: center; }
.app-ico { width: 30px; height: 30px; display: block; overflow: visible; }
.app-open::after { content: ""; position: absolute; left: 24px; bottom: 0; width: 7px; height: 4px; border-radius: 2px; background: #9a9f9e; }
.app-active { width: 48px; margin: 0 3.5px; background: rgba(255,255,255,.05); border-radius: 5px; }
.app-active::after { content: ""; position: absolute; left: 15px; bottom: 1px; width: 19px; height: 4px; border-radius: 2px; background: #4fc3f7; }
.chrome { width: 30px; height: 30px; border-radius: 50%; background: radial-gradient(circle closest-side, #3f86f3 0 44%, #fff 46% 60%, transparent 62%), conic-gradient(#ea4335 0 90deg, #fbbc04 90deg 210deg, #34a853 210deg 330deg, #ea4335 330deg); display: block; }
.chrome-badge { position: absolute; right: 3px; top: 3px; width: 20px; height: 24px; border-radius: 50%; background: radial-gradient(circle at 50% 30%, #3a2e2c 0 35%, #c9c2b8 60%, #6d6358); }
.amz { font: 700 22px "Noto Sans", sans-serif; fill: #888; text-anchor: middle; }

.tray { display: flex; align-items: center; margin-left: 84px; flex: none; }
.tr-kb { margin-left: 22px; }
.tr-pad { margin-left: 20px; }
.tr-lang { width: 32px; margin-left: 22px; font-size: 14px; text-align: center; letter-spacing: .1px; }
.tr-wifi { margin-left: 21px; }
.tr-vol { margin-left: 9px; }
.tr-bat { margin-left: 10px; }
.tr-clock { width: 80px; margin-left: 9px; display: flex; flex-direction: column; align-items: flex-end; font-size: 14px; line-height: 20px; letter-spacing: .12px; margin-bottom: 2px; }
.tr-bell { margin-left: 8px; overflow: visible; }
.tr-z { font: 700 8px "Noto Sans", sans-serif; fill: #1e2726; }
.tr-z2 { font: 700 9px "Noto Sans", sans-serif; fill: #fff; }
```
